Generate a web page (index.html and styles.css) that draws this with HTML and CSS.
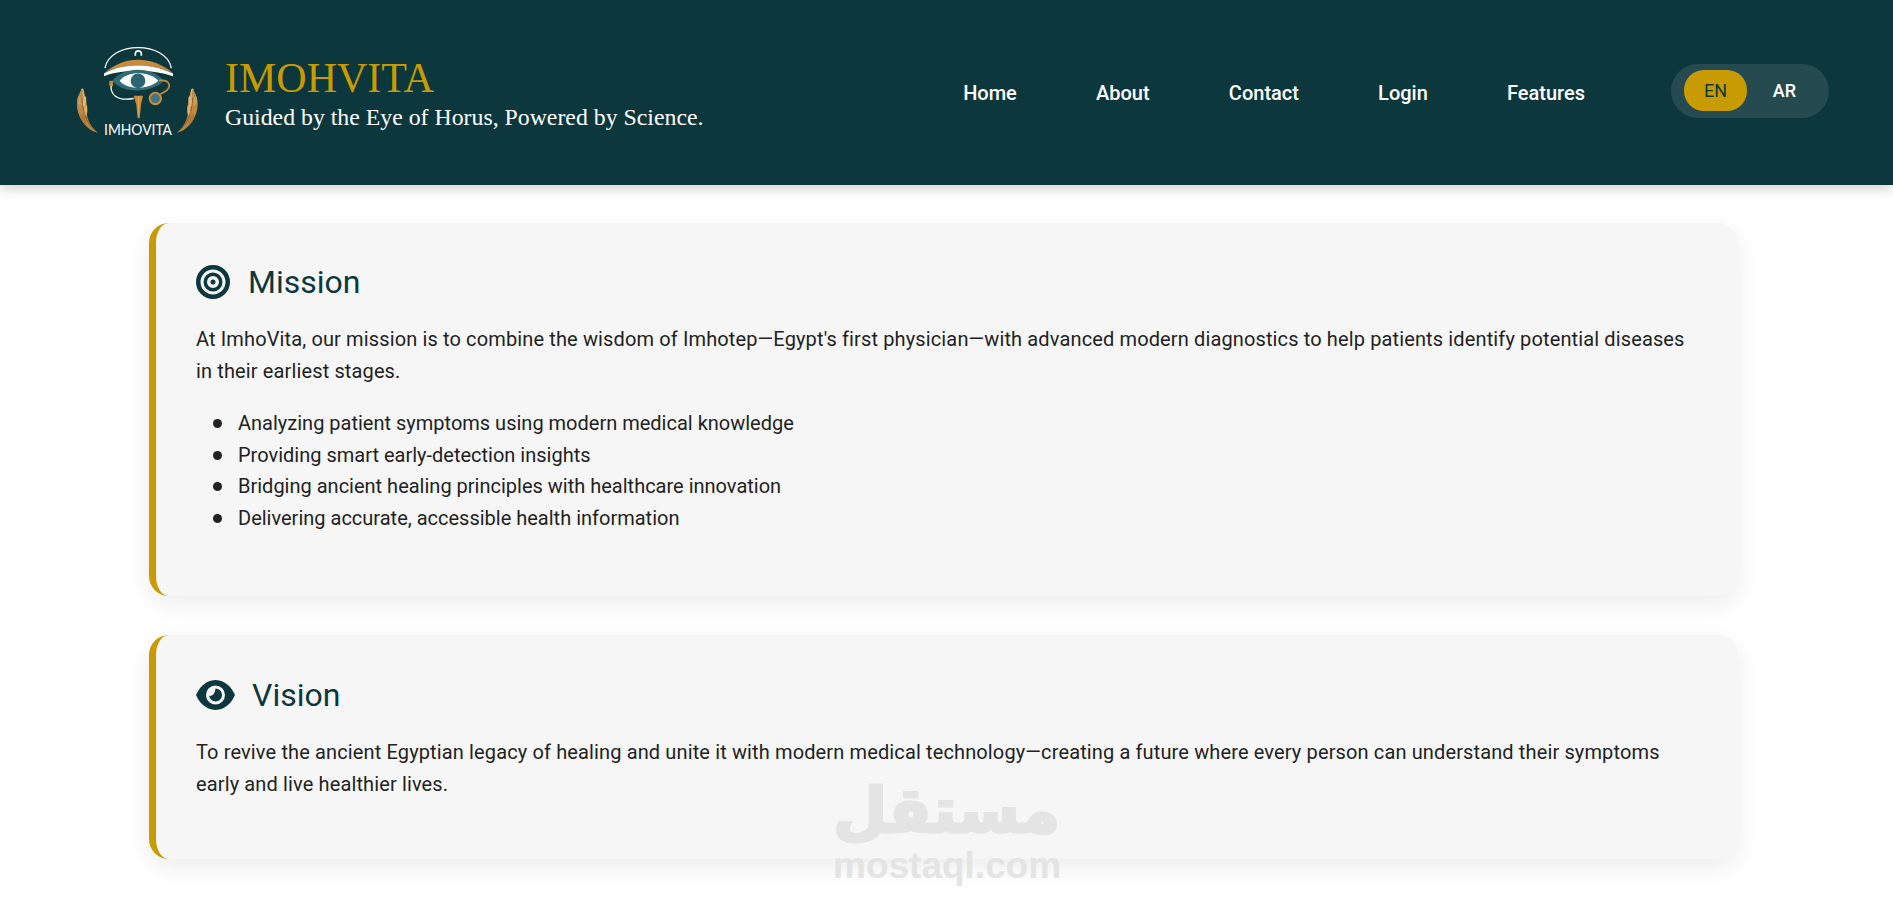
FILE: index.html
```html
<!DOCTYPE html>
<html lang="en">
<head>
  <meta charset="UTF-8">
  <meta name="viewport" content="width=device-width, initial-scale=1.0">
  <title>ImhoVita - About</title>
  <link rel="stylesheet" href="styles.css">
</head>
<body>
  <header class="site-header">
    <div class="brand">
      <svg class="brand-logo" viewBox="40 40 390 290" width="130" height="97" aria-label="ImhoVita logo">
        <defs>
          <g id="laurel">
            <path d="M115 306C84 300 50 262 52 215C53 198 60 184 68 172C78 190 84 222 82 250C84 272 98 292 115 306Z" fill="#b9853f"/>
            <ellipse cx="68" cy="188" rx="5" ry="15" fill="#d9b06c"/>
            <ellipse cx="60" cy="212" rx="6" ry="16" fill="#c99a58" transform="rotate(-6 60 212)"/>
            <ellipse cx="74" cy="212" rx="5" ry="16" fill="#e0b878" transform="rotate(8 74 212)"/>
            <ellipse cx="62" cy="238" rx="7" ry="17" fill="#c08a44" transform="rotate(-12 62 238)"/>
            <ellipse cx="78" cy="238" rx="5" ry="16" fill="#d9b06c" transform="rotate(2 78 238)"/>
            <ellipse cx="72" cy="264" rx="7" ry="17" fill="#b27a36" transform="rotate(-24 72 264)"/>
            <path d="M114 305C84 285 66 245 66 178" fill="none" stroke="#7a5228" stroke-width="2"/>
          </g>
        </defs>
        <use href="#laurel"/>
        <use href="#laurel" transform="translate(466 0) scale(-1 1)"/>
        <!-- dome and hook -->
        <path d="M136 112C150 30 320 30 335 112" fill="none" stroke="#fff" stroke-width="4"/>
        <path d="M227 75V68Q228 60 236 60Q244 60 245 68V75" fill="none" stroke="#fff" stroke-width="5"/>
        <!-- brow -->
        <path d="M133 127C165 100 200 87 235 87C275 87 310 102 340 127C300 110 270 104 235 104C200 104 165 110 133 127Z" fill="#c98a3a"/>
        <path d="M133 136V128C165 110 200 104 235 104C270 104 300 110 340 128V136C300 124 270 120 235 120C200 120 165 124 133 136Z" fill="#fff"/>
        <!-- eye -->
        <path d="M158 150C190 106 280 106 312 150C280 186 190 192 158 150Z" fill="#2f6d76"/>
        <path d="M180 150C202 120 270 120 296 150C270 176 202 180 180 150Z" fill="#fff"/>
        <circle cx="235" cy="150" r="22" fill="#2b6472"/>
        <!-- tube -->
        <path d="M155 160C150 190 170 212 222 203" fill="none" stroke="#fff" stroke-width="4"/>
        <rect x="149" y="150" width="11" height="16" fill="#c98a3a"/>
        <path d="M298 149C330 145 336 165 320 180L302 190" fill="none" stroke="#c98a3a" stroke-width="5"/>
        <circle cx="287" cy="203" r="17" fill="#3d7786" stroke="#c98a3a" stroke-width="6"/>
        <path d="M222 195H250L244 222L240 262H234L230 222Z" fill="#c98a3a"/>
        <path d="M235 198H239L238 255H236Z" fill="#e0ad62"/>
        <text class="logo-text" x="235" y="312" text-anchor="middle" textLength="204" lengthAdjust="spacingAndGlyphs">IMHOVITA</text>
      </svg>
      <div class="brand-copy">
        <div class="brand-name">IMOHVITA</div>
        <div class="brand-tag">Guided by the Eye of Horus, Powered by Science.</div>
      </div>
    </div>
    <nav class="main-nav">
      <a href="#">Home</a>
      <a href="#">About</a>
      <a href="#">Contact</a>
      <a href="#">Login</a>
      <a href="#">Features</a>
    </nav>
    <div class="lang-switch">
      <button class="lang-btn active">EN</button>
      <button class="lang-btn">AR</button>
    </div>
  </header>

  <main class="container">
    <section class="info-card">
      <h2>
        <svg class="card-icon" viewBox="0 0 34 34" width="34" height="34" aria-hidden="true">
          <circle cx="17" cy="17" r="14.75" fill="none" stroke="#0c383d" stroke-width="4.5"/>
          <circle cx="17" cy="17" r="7.75" fill="none" stroke="#0c383d" stroke-width="3.5"/>
          <circle cx="17" cy="17" r="2.5" fill="#0c383d"/>
        </svg>
        Mission
      </h2>
      <p>At ImhoVita, our mission is to combine the wisdom of Imhotep—Egypt's first physician—with advanced modern diagnostics to help patients identify potential diseases in their earliest stages.</p>
      <ul>
        <li>Analyzing patient symptoms using modern medical knowledge</li>
        <li>Providing smart early-detection insights</li>
        <li>Bridging ancient healing principles with healthcare innovation</li>
        <li>Delivering accurate, accessible health information</li>
      </ul>
    </section>

    <section class="info-card">
      <h2 class="eye-title">
        <svg class="card-icon" viewBox="0 0 39 30" width="39" height="30" aria-hidden="true">
          <path fill-rule="evenodd" fill="#0c383d" d="M19.5 0C30 0 36.500 9 39 15C36.500 21 30 30 19.500 30C9 30 2.500 21 0 15C2.500 9 9 0 19.500 0ZM19.500 5.500A9.500 9.500 0 1 0 19.500 24.500A9.500 9.500 0 1 0 19.500 5.500Z"/>
          <path fill="#0c383d" d="M19.500 8.500A6.500 6.500 0 1 1 13.100 15.800C15.500 16.500 19 14.500 19.500 8.500Z"/>
        </svg>
        Vision
      </h2>
      <p>To revive the ancient Egyptian legacy of healing and unite it with modern medical technology—creating a future where every person can understand their symptoms early and live healthier lives.</p>
    </section>
  </main>

  <div class="watermark">
    <div class="watermark-ar" lang="ar" dir="rtl">مستقل</div>
    <div class="watermark-en">mostaql.com</div>
  </div>
</body>
</html>
```

FILE: styles.css
```css
html, body {
  margin: 0;
  padding: 0;
}
body {
  font-family: Roboto, "Noto Sans", sans-serif;
  background-color: #ffffff;
  color: #222;
  height: 903px;
  overflow: hidden;
  position: relative;
}
.site-header {
  height: 185px;
  box-sizing: border-box;
  padding: 0 64px 0 73px;
  background-color: #0c383d;
  box-shadow: 0 4px 12px rgba(0, 0, 0, 0.18);
  display: flex;
  align-items: center;
}
.brand {
  display: flex;
  align-items: center;
  gap: 22px;
}
.brand-logo {
  display: block;
}
.logo-text {
  font-family: "Lato", sans-serif;
  font-size: 46px;
  font-weight: 400;
  fill: #ffffff;
}
.brand-copy {
  font-family: "Liberation Serif", serif;
  padding-top: 2px;
}
.brand-name {
  font-size: 42px;
  line-height: 46px;
  color: #c89b03;
}
.brand-tag {
  font-size: 23.8px;
  line-height: 32px;
  color: #ffffff;
}
.main-nav {
  margin-left: auto;
  display: flex;
  gap: 79.2px;
}
.main-nav a {
  color: #ffffff;
  text-decoration: none;
  font-size: 20px;
  font-weight: 500;
}
.lang-switch {
  margin: 0 0 3px 86px;
  height: 54px;
  width: 158px;
  box-sizing: border-box;
  padding: 6px 13px;
  display: flex;
  gap: 6px;
  border-radius: 27px;
  background-color: #254b50;
}
.lang-btn {
  width: 63px;
  height: 41px;
  border: none;
  border-radius: 20px;
  background: transparent;
  color: #ffffff;
  font-family: inherit;
  font-size: 18px;
  font-weight: 500;
  padding: 0;
}
.lang-btn.active {
  background-color: #c89b03;
  color: #0c383d;
  font-weight: 400;
}
.container {
  margin: 38px 0 0 149px;
  width: 1589px;
}
.info-card {
  background-color: #f6f6f6;
  border-left: 7px solid #c89b03;
  border-radius: 20px;
  box-shadow: 0 8px 24px rgba(0, 0, 0, 0.08);
  padding: 40px 40px 38px;
  margin-bottom: 39px;
}
.info-card h2 {
  margin: 0 0 23px;
  display: flex;
  align-items: center;
  gap: 18px;
  font-size: 32px;
  line-height: 38px;
  font-weight: 400;
  color: #0c383d;
}
.info-card h2.eye-title {
  gap: 17px;
  padding-top: 1px;
}
.info-card p {
  margin: 0 0 21px;
  font-size: 20px;
  line-height: 31.5px;
  letter-spacing: 0.13px;
}
.info-card ul {
  margin: 0 0 24px;
  padding: 0 0 0 17px;
  list-style: none;
  font-size: 20px;
  line-height: 31.5px;
}
.info-card li {
  display: flex;
  align-items: center;
  gap: 16px;
}
.info-card li::before {
  content: "";
  width: 9px;
  height: 9px;
  border-radius: 50%;
  background-color: #222;
}
.watermark {
  position: absolute;
  left: 833px;
  top: 775px;
  width: 227px;
  text-align: center;
  color: #e4e4e4;
  pointer-events: none;
}
.watermark-ar {
  font-family: "DejaVu Sans", sans-serif;
  font-weight: bold;
  font-size: 62px;
  line-height: 72px;
  -webkit-text-stroke: 3px #e4e4e4;
}
.watermark-en {
  font-family: "Liberation Sans", sans-serif;
  font-weight: bold;
  font-size: 37px;
  line-height: 38px;
}
```
